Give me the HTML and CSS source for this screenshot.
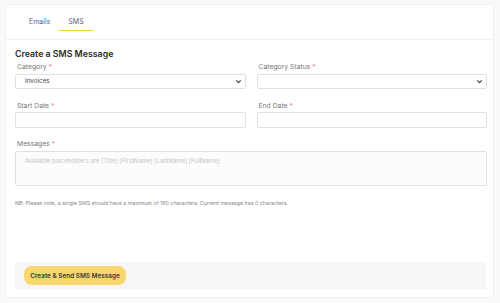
FILE: index.html
```html
<!DOCTYPE html>
<html>
  <head>
    <meta charset="utf-8">
    <title>SMS</title>
    <link rel="stylesheet" href="styles.css">
  </head>
  <body>
    <div class="card">
      <!-- tabs -->
      <div class="tabs">
        <span class="tab">Emails</span>
        <span class="tab active">SMS</span>
      </div>
      <!-- form -->
      <form class="sms-form">
        <h2 class="title">Create a SMS Message</h2>
        <div class="row">
          <div class="field">
            <label>Category <i>*</i></label>
            <div class="select">
              <span>Invoices</span>
              <svg viewBox="0 0 10 10"><path d="M2.5 3.8 5 6.3 7.5 3.8" /></svg>
            </div>
          </div>
          <div class="field">
            <label>Category Status <i>*</i></label>
            <div class="select">
              <span></span>
              <svg viewBox="0 0 10 10"><path d="M2.5 3.8 5 6.3 7.5 3.8" /></svg>
            </div>
          </div>
        </div>
        <div class="row">
          <div class="field">
            <label>Start Date <i>*</i></label>
            <div class="input"></div>
          </div>
          <div class="field">
            <label>End Date <i>*</i></label>
            <div class="input"></div>
          </div>
        </div>
        <div class="field">
          <label>Messages <i>*</i></label>
          <div class="textarea">Available placeholders are [Title] [FirstName] [LastName] [FullName]</div>
        </div>
        <p class="note">NB: Please note, a single SMS should have a maximum of 160 characters. Current message has 0 characters.</p>
      </form>
      <!-- footer -->
      <div class="footer">
        <button type="button" class="btn">Create &amp; Send SMS Message</button>
      </div>
    </div>
  </body>
</html>
```

FILE: styles.css
```css
* {
  box-sizing: border-box;
}
body {
  margin: 0;
  padding: 4px 6px 5px 5px;
  background: #f9f9f9;
  font-family: Inter, "Noto Sans", sans-serif;
  color: #444;
}
.card {
  height: 294px;
  background: #fff;
  border: 1px solid #f0f0f0;
  display: flex;
  flex-direction: column;
}
/* -------- tabs ------------- */
.tabs {
  height: 35px;
  border-bottom: 1px solid #f0f0f0;
  display: flex;
  align-items: flex-start;
  padding: 12px 0 0 14px;
}
.tab {
  font-size: 7px;
  color: #666;
  padding: 0 9px;
  height: 14px;
  line-height: 10px;
}
.tab.active {
  border-bottom: 1.5px solid #f5d547;
}
/* -------- form ------------- */
.sms-form {
  padding: 0 6px 0 9px;
  flex: 1;
}
.title {
  margin: 8px 0 0;
  font-size: 8.8px;
  font-weight: 600;
  color: #2a2a2a;
  line-height: 12px;
}
.row {
  display: grid;
  grid-template-columns: 1fr 1fr;
  gap: 11px;
}
.field label {
  display: block;
  font-size: 6.8px;
  color: #777;
  line-height: 9px;
  margin: 2px 0 2.5px 2px;
}
.field label i {
  font-style: normal;
  color: #ec7a8e;
}
.select, .input {
  border: 1px solid #e0e0e0;
  border-radius: 2px;
  background: #fff;
}
.select {
  height: 15px;
  display: flex;
  align-items: center;
  justify-content: space-between;
  padding: 0 2px 0 9px;
  font-size: 6.3px;
  color: #444;
}
.input {
  height: 16px;
}
.select svg {
  width: 9px;
  height: 9px;
  fill: none;
  stroke: #444;
  stroke-width: 1.3;
}
.row + .row .field label {
  margin-top: 12px;
}
.row + .field label {
  margin-top: 11px;
}
.textarea {
  height: 35px;
  border: 1px solid #e0e0e0;
  border-radius: 2px;
  padding: 5px 9px;
  font-size: 6px;
  color: #c4c4c4;
  background: #fcfcfc;
}
.note {
  margin: 14px 0 0;
  font-size: 5.3px;
  color: #888;
}
/* -------- footer ------------- */
.footer {
  margin: 0 7px 8px 9px;
  height: 27px;
  background: #f6f6f6;
  display: flex;
  align-items: center;
  padding-left: 9px;
}
.btn {
  height: 19px;
  width: 102px;
  border: none;
  border-radius: 8px;
  background: #f8d66e;
  font-family: inherit;
  font-size: 6.4px;
  font-weight: 600;
  color: #3a3a3a;
  padding: 0;
}
```
